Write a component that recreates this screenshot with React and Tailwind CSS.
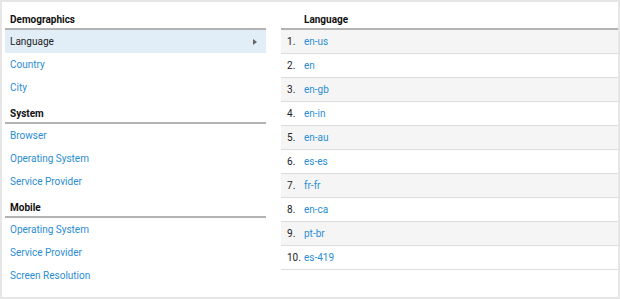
import React from "react";

const sections = [
  { title: "Demographics", items: ["Language", "Country", "City"] },
  { title: "System", items: ["Browser", "Operating System", "Service Provider"] },
  { title: "Mobile", items: ["Operating System", "Service Provider", "Screen Resolution"] },
];

const languages = ["en-us", "en", "en-gb", "en-in", "en-au", "es-es", "fr-fr", "en-ca", "pt-br", "es-419"];

const App = () => {
  return (
    <div
      className="w-[620px] h-[299px] bg-white border-2 border-[#e6e6e6] flex pl-[3px] text-[10px] text-[#222]"
      style={{ fontFamily: "Roboto, 'Liberation Sans', sans-serif" }}
    >
      <div className="w-[261px] shrink-0">
        {sections.map((section, si) => (
          <div key={section.title}>
            <div
              className={`flex items-end px-[5px] pb-[1px] font-bold text-[#111] border-b-2 border-[#b3b3b3] ${
                si === 0 ? "h-[28px]" : "h-[25px]"
              }`}
            >
              {section.title}
            </div>
            {section.items.map((item, i) => {
              const active = si === 0 && i === 0;
              return (
                <div
                  key={item + i}
                  className={`h-[23px] flex items-center justify-between px-[5px] ${
                    active ? "bg-[#e1eef7] text-[#222]" : "text-[#2a8dd4]"
                  }`}
                >
                  <span>{item}</span>
                  {active && (
                    <span className="w-0 h-0 mr-[4px] border-y-[3px] border-y-transparent border-l-[4px] border-l-[#666]" />
                  )}
                </div>
              );
            })}
          </div>
        ))}
      </div>

      <div className="flex-1 ml-[15px]">
        <div className="h-[28px] flex items-end pb-[1px] pl-[23px] font-bold text-[#111] border-b-2 border-[#b3b3b3]">
          Language
        </div>
        {languages.map((lang, i) => (
          <div
            key={lang}
            className={`h-[24px] flex items-center pl-[6px] border-b border-[#dcdcdc] ${
              i % 2 === 0 ? "bg-[#f5f5f5]" : "bg-white"
            }`}
          >
            <span className="w-[17px] text-[#222]">{i + 1}.</span>
            <span className="text-[#2a8dd4]">{lang}</span>
          </div>
        ))}
      </div>
    </div>
  );
};

export default App;
